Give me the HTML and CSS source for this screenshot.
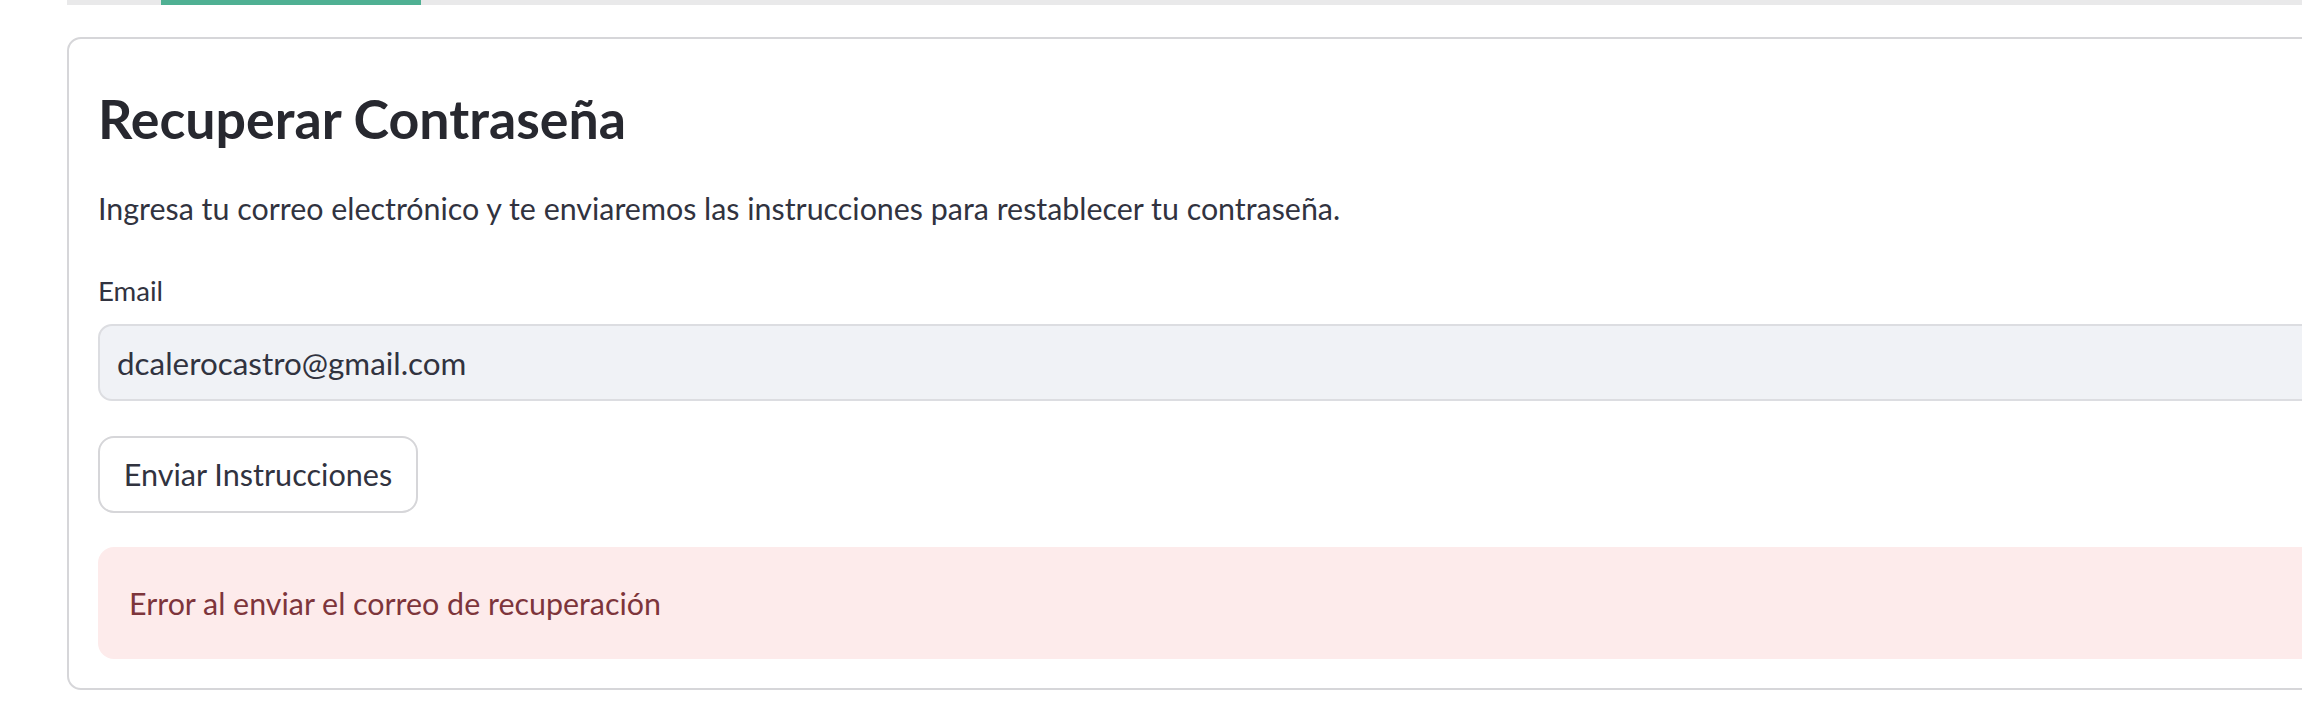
FILE: index.html
```html
<!DOCTYPE html>
<html lang="es">
<head>
<meta charset="utf-8">
<title>Recuperar Contraseña</title>
<link rel="stylesheet" href="styles.css">
</head>
<body>
<div class="viewport">
  <div class="main">
    <div class="tabbar"><div class="tab-active"></div></div>
    <form class="card">
      <h3 class="title">Recuperar Contraseña</h3>
      <p class="desc">Ingresa tu correo electrónico y te enviaremos las instrucciones para restablecer tu contraseña.</p>
      <label class="label" for="email">Email</label>
      <input class="input" id="email" type="text" value="dcalerocastro@gmail.com">
      <button class="btn" type="button">Enviar Instrucciones</button>
      <div class="alert">Error al enviar el correo de recuperación</div>
    </form>
  </div>
</div>
</body>
</html>
```
FILE: styles.css
```css
html, body {
  margin: 0;
  padding: 0;
  background: #ffffff;
  overflow: hidden;
}
body {
  font-family: Lato, "Open Sans", sans-serif;
  color: #31333f;
}
.viewport {
  width: 100vw;
  height: 100vh;
  overflow: hidden;
}
.main {
  width: 2600px;
  padding-left: 67px;
  box-sizing: border-box;
}
.tabbar {
  height: 5px;
  background: #e9e9ea;
  display: flex;
}
.tab-active {
  margin-left: 94px;
  width: 260px;
  height: 5px;
  background: #4fb093;
}
.card {
  margin: 32px 0 0 0;
  border: 2px solid #d6d6d9;
  border-radius: 14px;
  padding: 47px 29px 29px 29px;
  display: flex;
  flex-direction: column;
  align-items: flex-start;
}
.title {
  margin: 0;
  font-size: 53.7px;
  line-height: 64px;
  font-weight: 700;
  color: #27282f;
}
.desc {
  margin: 38px 0 0 0;
  font-size: 30.4px;
  line-height: 40px;
}
.label {
  margin-top: 45px;
  font-size: 27.6px;
  line-height: 36px;
}
.input {
  margin-top: 15px;
  box-sizing: border-box;
  width: 100%;
  height: 77px;
  padding: 0 17px;
  border: 2px solid #dcdde1;
  border-radius: 14px;
  background: #f0f2f6;
  font-family: inherit;
  font-size: 31.4px;
  color: #31333f;
  outline: none;
}
.btn {
  margin-top: 35px;
  box-sizing: border-box;
  height: 77px;
  width: 320px;
  display: flex;
  align-items: center;
  justify-content: center;
  border: 2px solid #d6d6d9;
  border-radius: 16px;
  background: #ffffff;
  font-family: inherit;
  font-size: 30.6px;
  color: #31333f;
  padding: 0;
}
.alert {
  margin-top: 34px;
  box-sizing: border-box;
  width: 100%;
  height: 112px;
  display: flex;
  align-items: center;
  padding: 0 31px;
  border-radius: 16px;
  background: #fdebeb;
  color: #7d353b;
  font-size: 30.4px;
}
```
